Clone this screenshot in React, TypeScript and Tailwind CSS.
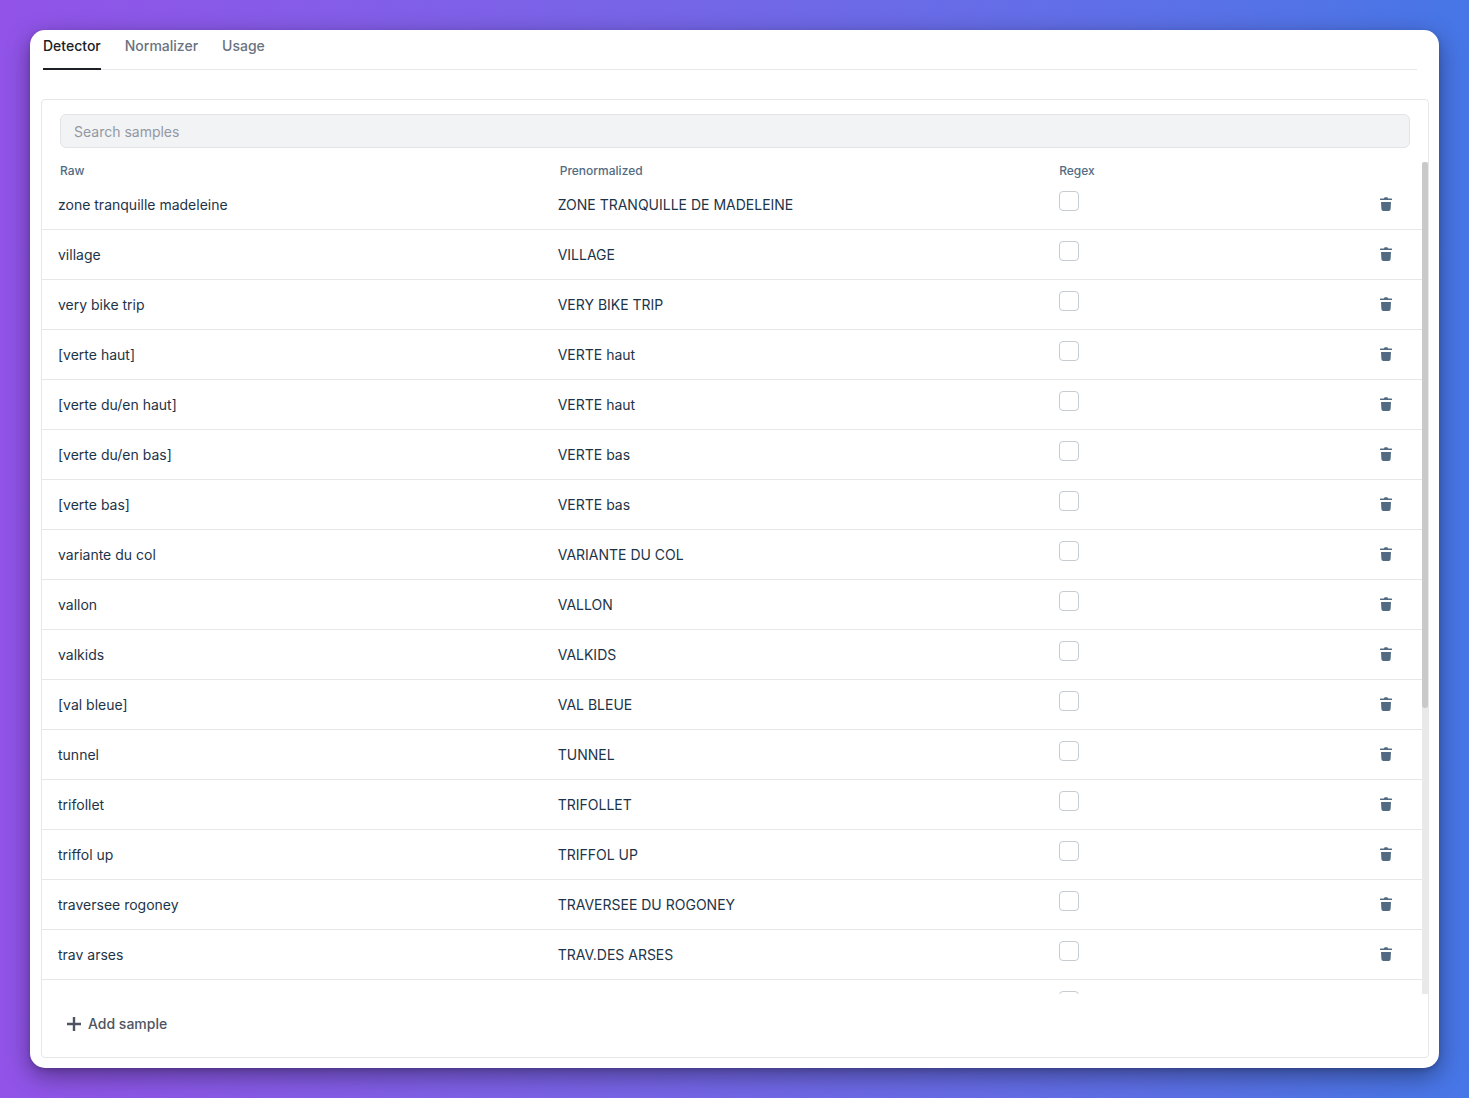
import React from "react";

const samples: [string, string][] = [
  ["zone tranquille madeleine", "ZONE TRANQUILLE DE MADELEINE"],
  ["village", "VILLAGE"],
  ["very bike trip", "VERY BIKE TRIP"],
  ["[verte haut]", "VERTE haut"],
  ["[verte du/en haut]", "VERTE haut"],
  ["[verte du/en bas]", "VERTE bas"],
  ["[verte bas]", "VERTE bas"],
  ["variante du col", "VARIANTE DU COL"],
  ["vallon", "VALLON"],
  ["valkids", "VALKIDS"],
  ["[val bleue]", "VAL BLEUE"],
  ["tunnel", "TUNNEL"],
  ["trifollet", "TRIFOLLET"],
  ["triffol up", "TRIFFOL UP"],
  ["traversee rogoney", "TRAVERSEE DU ROGONEY"],
  ["trav arses", "TRAV.DES ARSES"],
  ["", ""],
];

function Trash() {
  return (
    <svg width="12" height="14" viewBox="0 0 12 14" fill="#526b82">
      <path d="M.3 1.600H3.800Q4.400 .3 5 .3H7Q7.600 .3 8.200 1.600H11.700Q12 1.600 12 2V2.800Q12 3.100 11.700 3.100H.3Q0 3.100 0 2.800V2Q0 1.600 .3 1.600Z" />
      <path d="M1 5H11L10.600 12Q10.500 14 8.600 14H3.400Q1.500 14 1.400 12Z" />
    </svg>
  );
}

export default function App() {
  return (
    <div className="h-[1098px] w-[1469px] overflow-hidden bg-linear-to-r from-[#9153e8] to-[#4676e6] p-[30px] font-['Inter',sans-serif]">
      <main className="flex h-[1038px] w-[1409px] flex-col rounded-[15px] bg-white pr-[10px] pl-[11px] shadow-[0_8px_24px_rgba(0,0,0,0.4),0_2px_5px_rgba(0,0,0,0.15)]">
        <nav className="mr-3 ml-0.5 flex h-10 shrink-0 gap-6 border-b border-[#e5e7e9] text-sm leading-8 font-medium text-[#6b7280]">
          <button className="h-10 border-b-2 border-[#1c2024] pb-1.5 text-[#1c2024]">Detector</button>
          <button className="h-10 pb-2">Normalizer</button>
          <button className="h-10 pb-2">Usage</button>
        </nav>
        <section className="mt-[29px] flex h-[959px] flex-col rounded-[4px] border border-[#e5e7e9]">
          <input
            placeholder="Search samples"
            className="mx-[18px] mt-[14px] h-[34px] shrink-0 rounded-[6px] border border-[#e2e4e7] bg-[#f2f3f5] px-[13px] pt-px text-sm placeholder:text-[#9298a3]"
          />
          <div className="mt-[14px] flex h-[832px] shrink-0">
            <div className="h-full min-w-0 flex-1 overflow-hidden">
              <div className="grid h-[18px] grid-cols-[499.700px_499.500px_1fr] pl-[18px] text-xs leading-[18px] font-medium text-[#526b82]">
                <span>Raw</span>
                <span>Prenormalized</span>
                <span>Regex</span>
              </div>
              {samples.map(([raw, normalized], i) => (
                <div
                  key={i}
                  className="grid h-[50px] grid-cols-[499.700px_501.300px_1fr_auto] border-b border-[#e5e7e9] pr-[30px] pl-4 text-sm leading-[50px] text-[#1d3448]"
                >
                  <span>{raw}</span>
                  <span>{normalized}</span>
                  <span className="mt-[11px] size-5 rounded-[4px] border border-[#c6ccd2] bg-white" />
                  <button className="mt-[17px] h-[14px]" aria-label="Delete">
                    <Trash />
                  </button>
                </div>
              ))}
            </div>
            <div className="w-[6px] bg-[#e9e9ea]">
              <div className="h-[546px] rounded-[3px] bg-[#c9c9c9]" />
            </div>
          </div>
          <button className="mt-[18px] ml-[25px] flex h-6 items-center gap-[7px] self-start text-sm font-medium text-[#4e5360]">
            <svg width="14" height="14" viewBox="0 0 14 14" fill="none" stroke="currentColor" strokeWidth="2.400">
              <path d="M7 0V14M0 7H14" />
            </svg>
            Add sample
          </button>
        </section>
      </main>
    </div>
  );
}
